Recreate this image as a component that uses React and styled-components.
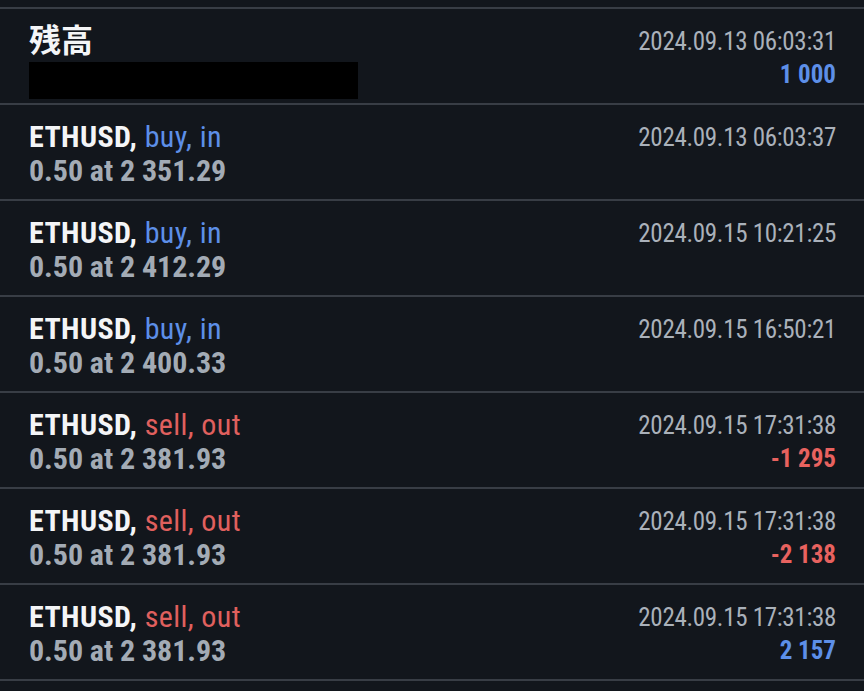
import styled, { createGlobalStyle } from 'styled-components';

const GlobalStyle = createGlobalStyle`
  html, body {
    margin: 0;
    padding: 0;
    background: #12161c;
  }
  body {
    font-family: "Roboto Condensed", Roboto, "Noto Sans CJK JP", sans-serif;
    font-stretch: condensed;
  }
`;

const deals = [
  { time: '2024.09.13 06:03:37', side: 'buy, in', price: '2 351.29' },
  { time: '2024.09.15 10:21:25', side: 'buy, in', price: '2 412.29' },
  { time: '2024.09.15 16:50:21', side: 'buy, in', price: '2 400.33' },
  { time: '2024.09.15 17:31:38', side: 'sell, out', price: '2 381.93', profit: '-1 295' },
  { time: '2024.09.15 17:31:38', side: 'sell, out', price: '2 381.93', profit: '-2 138' },
  { time: '2024.09.15 17:31:38', side: 'sell, out', price: '2 381.93', profit: '2 157' },
];

export default function App() {
  return (
    <>
      <GlobalStyle />
      <List>
        <Row>
          <Left>
            <Title $cjk>残高</Title>
            <Masked />
          </Left>
          <Right>
            <Time>2024.09.13 06:03:31</Time>
            <Amount $neg={false}>1 000</Amount>
          </Right>
        </Row>
        {deals.map((d, i) => {
          const sell = d.side.startsWith('sell');
          return (
            <Row key={i}>
              <Left>
                <Title>
                  ETHUSD, <Side $sell={sell}>{d.side}</Side>
                </Title>
                <Volume>0.50 at {d.price}</Volume>
              </Left>
              <Right>
                <Time>{d.time}</Time>
                {d.profit && <Amount $neg={d.profit.startsWith('-')}>{d.profit}</Amount>}
              </Right>
            </Row>
          );
        })}
      </List>
    </>
  );
}

const List = styled.div`
  padding-top: 7px;
`;

const Row = styled.div`
  display: flex;
  justify-content: space-between;
  height: 94px;
  padding: 0 28px 0 29px;
  border-top: 2px solid #383d45;
  &:last-child {
    border-bottom: 2px solid #383d45;
  }
`;

const Left = styled.div`
  display: flex;
  flex-direction: column;
  padding-top: 15px;
`;

const Right = styled.div`
  display: flex;
  flex-direction: column;
  align-items: flex-end;
  padding-top: 18px;
`;

const Title = styled.div`
  font-size: ${(p) => (p.$cjk ? '32px' : '30px')};
  font-weight: 700;
  line-height: 34px;
  letter-spacing: ${(p) => (p.$cjk ? '0' : '0.4px')};
  color: #f4f5f7;
`;

const Side = styled.span`
  font-weight: 400;
  color: ${(p) => (p.$sell ? '#e0605e' : '#5d8fe8')};
`;

const Volume = styled.div`
  font-size: 30px;
  font-weight: 700;
  line-height: 34px;
  letter-spacing: -0.05px;
  color: #a3abb5;
`;

const Masked = styled.div`
  width: 329px;
  height: 37px;
  margin-top: 4px;
  background: #000;
`;

const Time = styled.div`
  font-size: 25px;
  line-height: 30px;
  letter-spacing: -0.3px;
  color: #aab1ba;
`;

const Amount = styled.div`
  font-size: 25px;
  font-weight: 700;
  line-height: 35px;
  color: ${(p) => (p.$neg ? '#e8625f' : '#5d8fe8')};
`;
